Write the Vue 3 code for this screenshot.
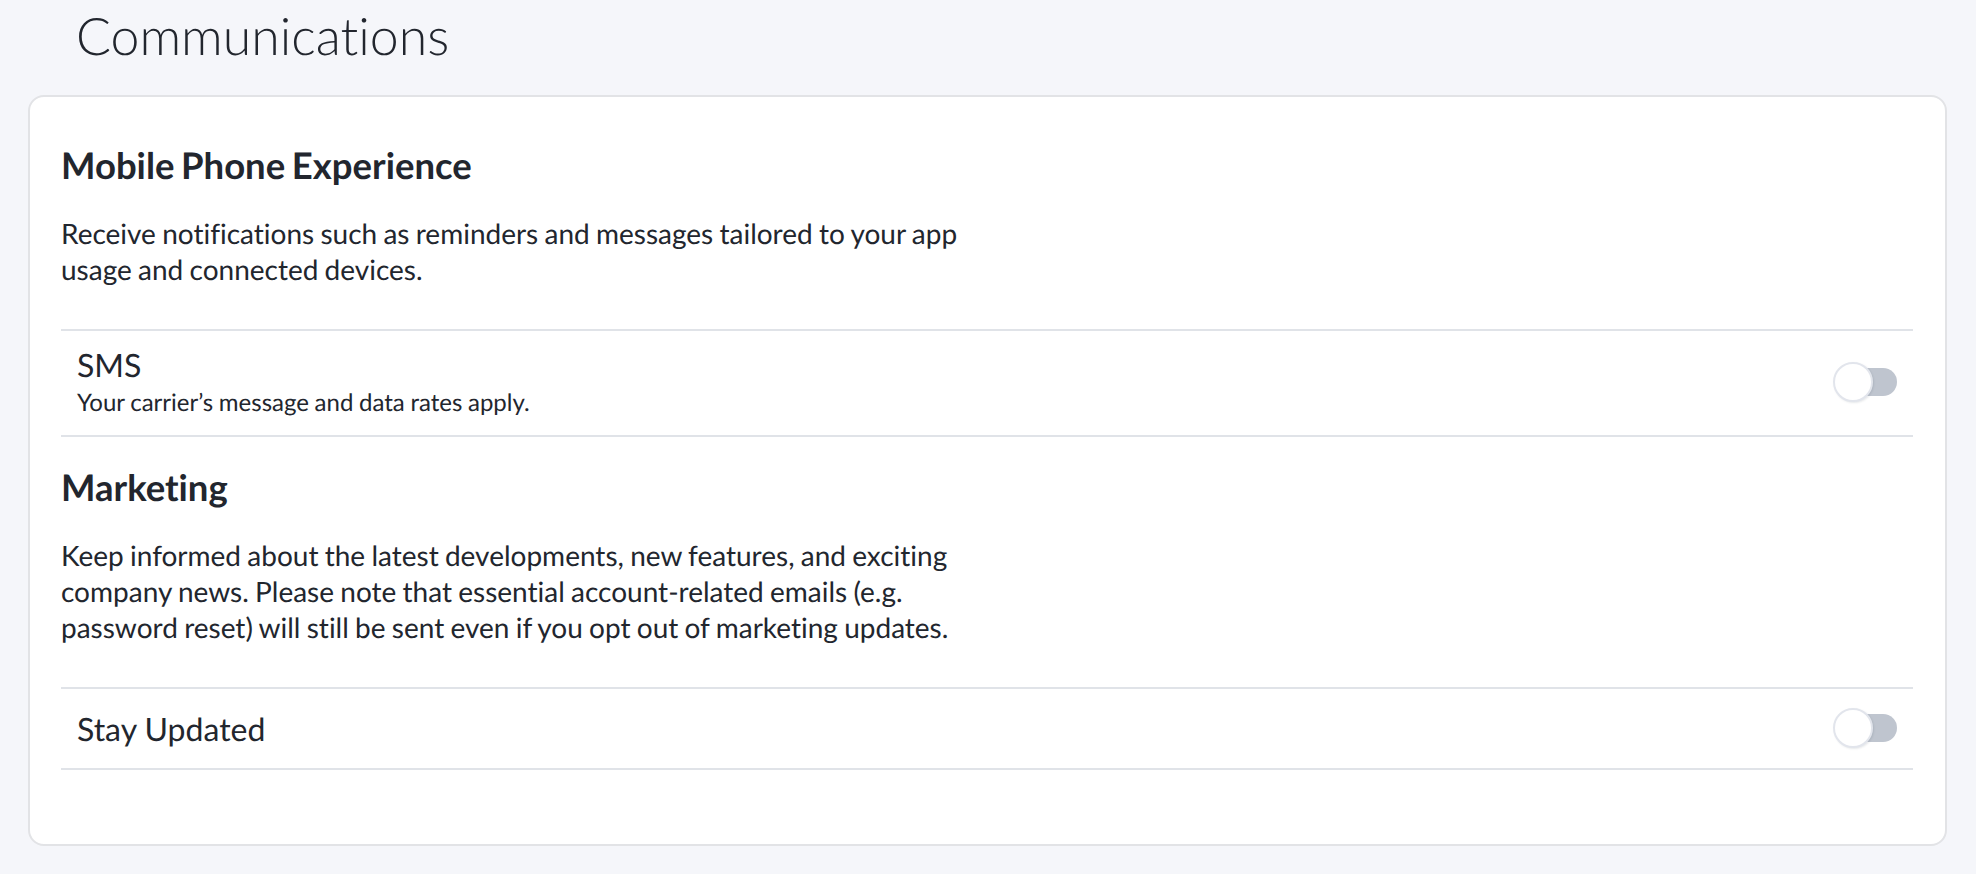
<script setup>
const sections = [
  {
    title: 'Mobile Phone Experience',
    lines: [
      'Receive notifications such as reminders and messages tailored to your app',
      'usage and connected devices.',
    ],
    label: 'SMS',
    hint: 'Your carrier’s message and data rates apply.',
  },
  {
    title: 'Marketing',
    lines: [
      'Keep informed about the latest developments, new features, and exciting',
      'company news. Please note that essential account-related emails (e.g.',
      'password reset) will still be sent even if you opt out of marketing updates.',
    ],
    label: 'Stay Updated',
    hint: '',
  },
];
</script>

<template>
  <div class="page">
    <h1 class="page-title">Communications</h1>
    <div class="card">
      <section v-for="section in sections" :key="section.title" class="section">
        <h2 class="section-title">{{ section.title }}</h2>
        <p class="section-text">
          <span v-for="line in section.lines" :key="line" class="text-line">{{ line }}</span>
        </p>
        <div class="row" :class="{ 'has-hint': section.hint }">
          <div class="row-copy">
            <div class="row-label">{{ section.label }}</div>
            <div v-if="section.hint" class="row-hint">{{ section.hint }}</div>
          </div>
          <div class="toggle">
            <span class="toggle-track"></span>
            <span class="toggle-knob"></span>
          </div>
        </div>
      </section>
    </div>
  </div>
</template>

<style>
html, body {
  margin: 0;
  background: #f5f6fa;
}
</style>

<style scoped>
.page {
  height: 874px;
  box-sizing: border-box;
  padding: 0 29px 0 28px;
  font-family: Lato, "Liberation Sans", sans-serif;
  color: #22262e;
  background: #f5f6fa;
  overflow: hidden;
  text-rendering: geometricPrecision;
  font-variant-ligatures: none;
}
.page-title {
  margin: 0;
  height: 95px;
  padding: 7px 0 0 48px;
  box-sizing: border-box;
  font-size: 51.8px;
  line-height: 58px;
  font-weight: 300;
}
.card {
  height: 751px;
  box-sizing: border-box;
  padding: 46px 32px 0 31px;
  background: #fff;
  border: 2px solid #e2e3e6;
  border-radius: 16px;
}
.section-title {
  margin: 0;
  font-size: 36.5px;
  line-height: 44px;
  font-weight: 700;
  word-spacing: -2.3px;
}
.section-text {
  margin: 28px 0 0;
  font-size: 28px;
  line-height: 36px;
  word-spacing: -0.9px;
}
.text-line {
  display: block;
}
.section + .section .section-title {
  margin-top: 28px;
}
.row {
  display: flex;
  align-items: center;
  justify-content: space-between;
  box-sizing: border-box;
  height: 83px;
  margin-top: 42px;
  padding: 0 16px;
  border-top: 2px solid #e0e3e8;
  border-bottom: 2px solid #e0e3e8;
}
.row.has-hint {
  height: 108px;
}
.row-label {
  font-size: 32px;
  line-height: 38px;
}
.row-hint {
  margin-top: 4px;
  font-size: 24px;
  line-height: 30px;
  word-spacing: -0.5px;
}
.has-hint .row-label {
  margin-top: -3px;
}
.toggle {
  position: relative;
  width: 64px;
  height: 40px;
  margin-top: -2px;
  flex: none;
}
.toggle-track {
  position: absolute;
  left: 8px;
  top: 6px;
  width: 56px;
  height: 28px;
  border-radius: 14px;
  background: #bfc5cf;
}
.toggle-knob {
  position: absolute;
  left: 0;
  top: 0;
  width: 40px;
  height: 40px;
  box-sizing: border-box;
  border-radius: 50%;
  background: #fff;
  border: 2px solid #e2e5ec;
  box-shadow: 1px 1px 2px rgba(60, 70, 90, 0.12);
}
</style>
